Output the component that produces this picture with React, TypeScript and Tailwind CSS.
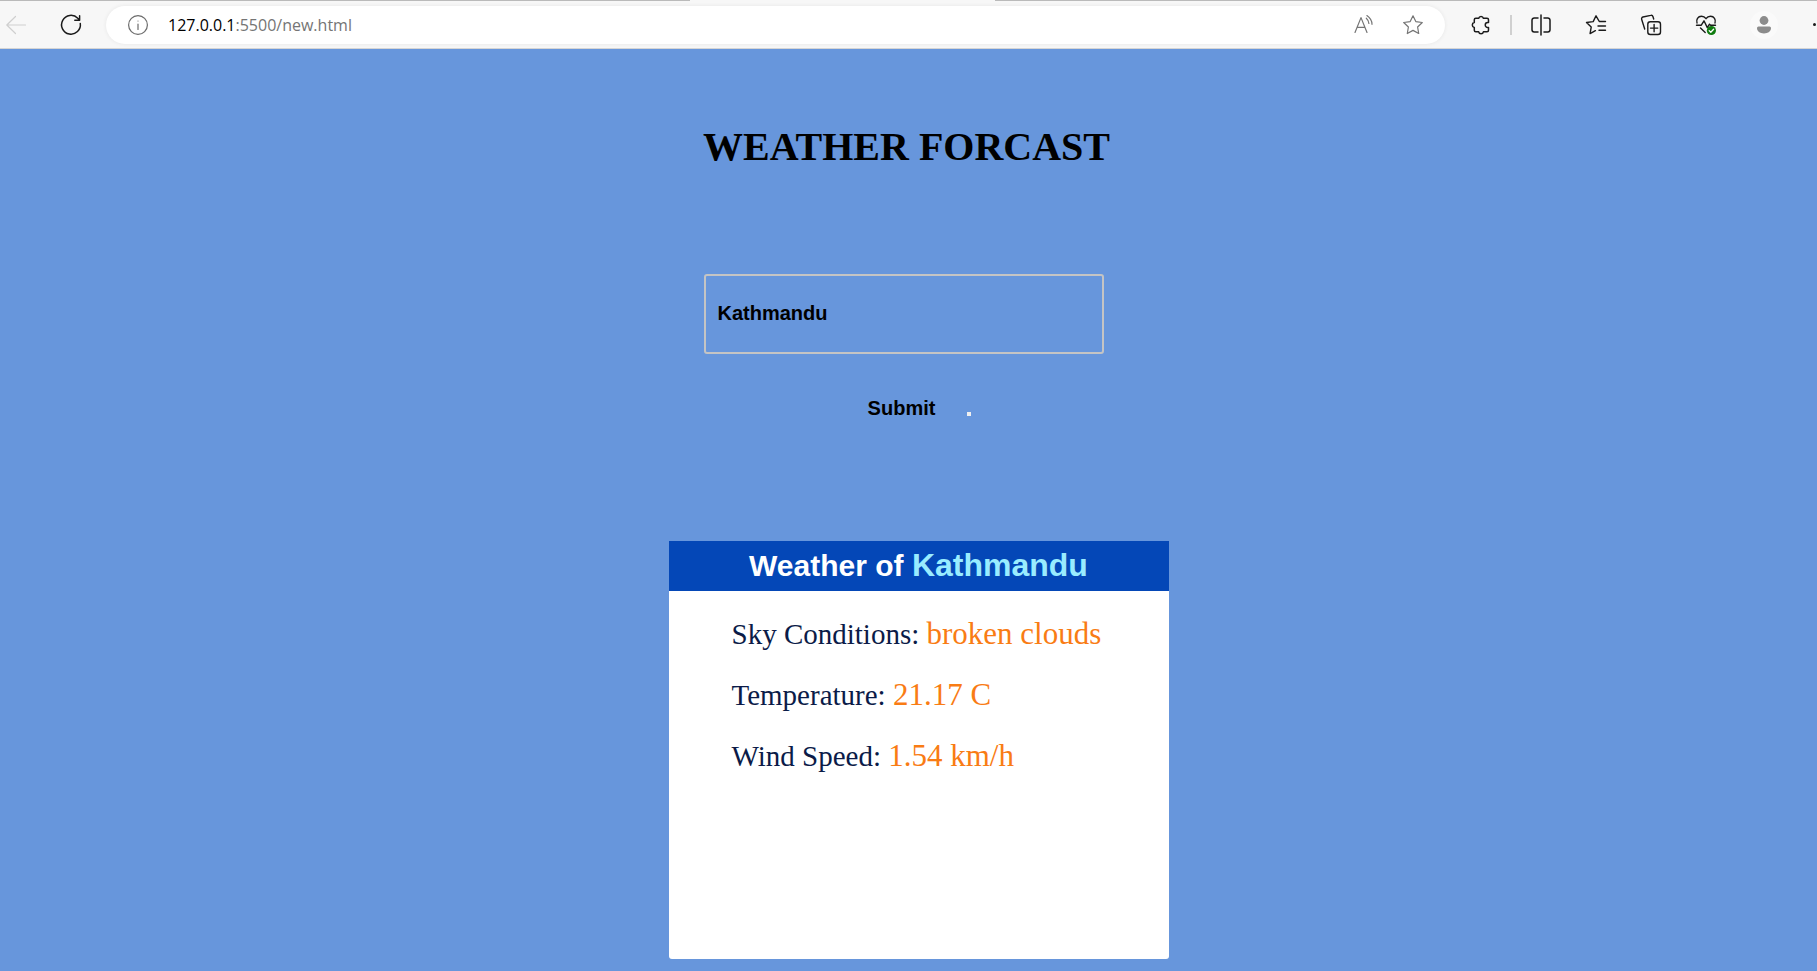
import { useState } from "react";
import type { ReactNode } from "react";

function Icon({ children, className = "text-[#1b1b1b]" }: { children: ReactNode; className?: string }) {
  return (
    <svg
      viewBox="0 0 20 20"
      aria-hidden="true"
      className={`size-5 shrink-0 overflow-visible ${className}`}
      fill="none"
      stroke="currentColor"
      strokeWidth="1.2"
      strokeLinecap="round"
      strokeLinejoin="round"
    >
      {children}
    </svg>
  );
}

function ToolButton({ label, children }: { label: string; children: ReactNode }) {
  return (
    <button type="button" aria-label={label} className="flex size-7 shrink-0 items-center justify-center">
      {children}
    </button>
  );
}

function BrowserBar() {
  return (
    <header className="bg-[#f7f7f7]">
      <div className="flex h-px">
        <div className="w-[38%] bg-[#bababa]" />
        <div className="w-[305px]" />
        <div className="flex-1 bg-[#bababa]" />
      </div>
      <div className="flex h-12 items-center overflow-hidden border-b border-[#d5d5d5] pl-0.5">
        <ToolButton label="Back">
          <Icon className="text-[#cfcfcf]">
            <path d="M19.5 10H.8M9.5 1.5.8 10l8.7 8.5" />
          </Icon>
        </ToolButton>
        <div className="ml-[27px] flex">
          <ToolButton label="Refresh">
            <Icon>
              <path strokeWidth="1.5" d="M19.3 8.5A9.4 9.4 0 1 1 16.8 3.3L18.5 5M18.6.8V5.2H13.8" />
            </Icon>
          </ToolButton>
        </div>
        <div className="ml-[21px] flex h-[38px] flex-1 items-center rounded-full bg-white px-[18px] shadow-[0_0_4px_rgba(0,0,0,0.07)]">
          <ToolButton label="View site information">
            <Icon className="text-[#6b6b6b]">
              <circle cx="10" cy="10" r="9.4" />
              <path d="M10 9v5.5" />
              <circle cx="10" cy="6" r=".6" fill="currentColor" stroke="none" />
            </Icon>
          </ToolButton>
          <p className="ml-4 flex-1 font-['Open_Sans',sans-serif] text-base text-[#757575]">
            <span className="text-black">127.0.0.1</span>:5500/new.html
          </p>
          <div className="flex items-center gap-[21px]">
            <ToolButton label="Read aloud">
              <Icon className="text-[#757575]">
                <path d="M1 17.5 7 2.6l6 14.9M3.2 12.3h7.6M12.3 3.2c1.7 1.5 2.5 3.2 2.6 5.3M12.9.6c3.2 2.2 5 5.2 5.1 8.7" />
              </Icon>
            </ToolButton>
            <ToolButton label="Add to favorites">
              <Icon className="text-[#757575]">
                <path d="m10 .8 2.8 5.8 6.500.9-4.700 4.500 1.100 6.500L10 15.400l-5.700 3.100 1.100-6.500L.7 7.500l6.500-.9L10 .8Z" />
              </Icon>
            </ToolButton>
          </div>
        </div>
        <div className="ml-[22px] flex items-center">
          <ToolButton label="Extensions">
            <Icon>
              <path
                strokeWidth="1.5"
                d="M4.800 3.300h2.900a2.400 2.400 0 0 1 4.700 0H16a1.500 1.500 0 0 1 1.500 1.500V7.500h-.8a2.400 2.400 0 0 0 0 4.900h.8v2.900a1.500 1.500 0 0 1-1.500 1.500h-3.600a2.400 2.400 0 0 1-4.700 0H4.800a1.500 1.500 0 0 1-1.500-1.500v-2.900a2.500 2.500 0 0 1 0-4.900V4.800A1.500 1.500 0 0 1 4.800 3.300Z"
              />
            </Icon>
          </ToolButton>
          <div className="mx-[15px] h-5 w-0.5 bg-[#d0d0d0]" />
          <div className="flex items-center gap-[27px]">
            <ToolButton label="Split screen">
              <Icon>
                <path strokeWidth="1.5" d="M10 0v20M7 3H3.200A2.200 2.200 0 0 0 1 5.200v9.600A2.200 2.200 0 0 0 3.200 17H7M13 3h3.800A2.200 2.200 0 0 1 19 5.200v9.600a2.200 2.200 0 0 1-2.200 2.200H13" />
              </Icon>
            </ToolButton>
            <ToolButton label="Favorites">
              <Icon>
                <path strokeWidth="1.4" d="M19.500 6.500h-6.200L10 .8 7.200 6.600l-6.700.9 4.700 4.600-1.100 6.500 5.300-2.900M12 11h7.500M13 15.300h6.500" />
              </Icon>
            </ToolButton>
            <ToolButton label="Collections">
              <Icon>
                <g strokeWidth="1.400">
                  <rect x="6.800" y="6.800" width="12.700" height="12.700" rx="2.500" />
                  <path d="M13.100 9.500v7.300M9.500 13.100h7.300M3.700 14 .7 4.500A1.900 1.900 0 0 1 1.900 2L9.700.4a1.900 1.900 0 0 1 2.300 1.300l.7 2.300" />
                </g>
              </Icon>
            </ToolButton>
            <ToolButton label="Browser essentials">
              <Icon>
                <path
                  strokeWidth="1.400"
                  d="M1 8C-.2 4.500 2 1.300 5.500 1.300c2 0 3.400.9 4.500 2.400 1.100-1.500 2.500-2.400 4.500-2.400C18 1.300 20.200 4.500 19 8M.5 10.200h4.800L8 5.800l3.300 6.800 2.200-3.400 1.100 1h4.900M4.500 13l4.700 4.500"
                />
                <circle cx="15.400" cy="15.500" r="4.600" fill="#107c10" stroke="none" />
                <path stroke="white" strokeWidth="1.300" d="m13.200 15.600 1.600 1.600 2.800-3" />
              </Icon>
            </ToolButton>
          </div>
          <button type="button" aria-label="Profile" className="ml-[30px] flex size-7 shrink-0 items-center justify-center rounded-full bg-[#fafafa]">
            <Icon className="text-[#8c8c8c]">
              <circle cx="10" cy="5.500" r="4.400" fill="currentColor" stroke="none" />
              <path fill="currentColor" stroke="none" d="M4.500 11.600h11A1.500 1.500 0 0 1 17 13.100c0 3.200-2.800 5.400-7 5.400s-7-2.200-7-5.400a1.500 1.500 0 0 1 1.500-1.500Z" />
            </Icon>
          </button>
          <button type="button" aria-label="Settings and more" className="ml-[35px] flex h-7 w-1 items-center">
            <span className="size-[3px] shrink-0 rounded-full bg-[#1b1b1b]" />
          </button>
        </div>
      </div>
    </header>
  );
}

const readings = [
  { label: "Sky Conditions:", value: "broken clouds" },
  { label: "Temperature:", value: "21.17 C" },
  { label: "Wind Speed:", value: "1.54 km/h" },
];

export default function App() {
  const [city, setCity] = useState("Kathmandu");

  return (
    <div className="flex min-h-screen flex-col bg-[#6796dc] font-['Liberation_Serif',serif]">
      <BrowserBar />
      <main className="flex flex-1 flex-col items-center pt-[74px] pb-3">
        <h1 className="mr-1 text-[40px] leading-12 font-bold text-black">WEATHER FORCAST</h1>
        <form
          onSubmit={(event) => event.preventDefault()}
          className="mt-[103px] mr-2.5 flex flex-col items-center font-['Liberation_Sans',sans-serif] text-xl font-bold text-black"
        >
          <input
            aria-label="City"
            value={city}
            onChange={(event) => setCity(event.target.value)}
            className="h-20 w-[400px] rounded-[3px] border-2 border-[#c4c4c4] bg-transparent px-3 pb-0.5 outline-none"
          />
          <div className="mt-8 flex items-center">
            <button type="submit" className="h-11 w-[130px]">
              Submit
            </button>
            <span className="mt-3 size-1 bg-[#efefef]" />
          </div>
        </form>
        <section className="mt-[111px] ml-5 min-h-[418px] w-[500px] overflow-hidden rounded-b-[3px] bg-white">
          <h2 className="h-[50px] bg-[#0447b7] text-center font-['Liberation_Sans',sans-serif] text-[30px] leading-[48px] font-bold text-white">
            Weather of <span className="text-[32px] text-[#99ecff]">Kathmandu</span>
          </h2>
          <div className="flex flex-col gap-[25px] pt-[25px] pl-[63px] text-[29px] leading-9 text-[#0b1b48]">
            {readings.map(({ label, value }) => (
              <p key={label}>
                {label} <span className="text-[31px] text-[#f97c14]">{value}</span>
              </p>
            ))}
          </div>
        </section>
      </main>
    </div>
  );
}
